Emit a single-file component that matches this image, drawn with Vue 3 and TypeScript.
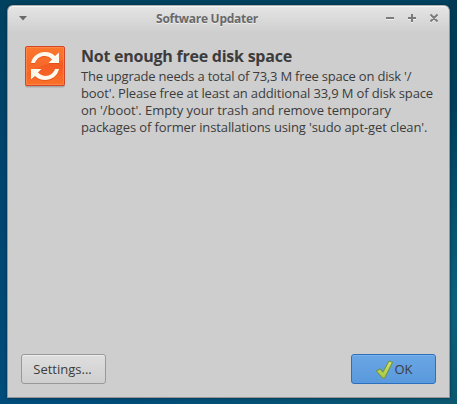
<script setup lang="ts">
const title: string = 'Software Updater'
const heading: string = 'Not enough free disk space'
const lines: string[] = [
  "The upgrade needs a total of 73,3 M free space on disk '/",
  "boot'. Please free at least an additional 33,9 M of disk space",
  "on '/boot'. Empty your trash and remove temporary",
  "packages of former installations using 'sudo apt-get clean'.",
]
</script>

<template>
  <div class="desktop">
    <section class="window">
      <header class="titlebar">
        <svg class="menu" width="8" height="5" viewBox="0 0 8 5"><path d="M0 0H8L4 4.6Z" fill="#696969" /></svg>
        <span class="title">{{ title }}</span>
        <svg class="controls" width="54" height="10" viewBox="0 0 54 10" fill="none" stroke="#fff" stroke-width="2">
          <g opacity=".6" transform="translate(0 1)"><path d="M1 5H9M23 5H31M27 1V9M45.5 1.5L52.5 8.5M52.5 1.5L45.5 8.5" /></g>
          <path stroke="#7b7b7b" d="M1 5H9M23 5H31M27 1V9M45.5 1.5L52.5 8.5M52.5 1.5L45.5 8.5" />
        </svg>
      </header>
      <main class="message">
        <svg class="app-icon" width="44" height="44" viewBox="0 0 44 44">
          <defs>
            <linearGradient id="orange" x2="0" y2="1">
              <stop stop-color="#fb7029" /><stop offset=".5" stop-color="#f35b22" /><stop offset="1" stop-color="#fc722a" />
            </linearGradient>
          </defs>
          <rect x="2" y="3" width="40" height="39.500" rx="2" fill="#777" opacity=".45" />
          <rect x="2.5" y="1.5" width="39" height="39" rx="1.5" fill="url(#orange)" stroke="#d24527" />
          <path d="M3 2H41V15C28 17 15 22 3 28Z" fill="#ff8b3d" opacity=".3" />
          <rect x="3.5" y="2.5" width="37" height="37" rx=".8" fill="none" stroke="#ff9960" opacity=".5" />
          <g fill="#c83c0c" opacity=".4" transform="translate(0 1)">
            <path d="M8 18C9.500 11 15.500 7 22 7C26 7 29.500 8.500 32 11L36 7.500V18H25.500L29 14.500C24 9 15 10 12 18Z" />
            <path d="M36 24C34.500 31 28.500 35 22 35C18 35 14.500 33.500 12 31L8 34.500V24H18.500L15 27.500C20 33 29 32 32 24Z" />
          </g>
          <g fill="#fff8ec">
            <path d="M8 18C9.500 11 15.500 7 22 7C26 7 29.500 8.500 32 11L36 7.500V18H25.500L29 14.500C24 9 15 10 12 18Z" />
            <path d="M36 24C34.500 31 28.500 35 22 35C18 35 14.500 33.500 12 31L8 34.500V24H18.500L15 27.500C20 33 29 32 32 24Z" />
          </g>
        </svg>
        <div class="copy">
          <h1>{{ heading }}</h1>
          <p><span v-for="(line, i) in lines" :key="i" :class="['line', `line-${i + 1}`]">{{ line }}</span></p>
        </div>
      </main>
      <footer class="actions">
        <button class="button" type="button"><span class="settings">Settings...</span></button>
        <button class="button primary" type="button">
          <svg width="20" height="20" viewBox="0 0 20 20">
            <defs><linearGradient id="green" x2="0" y2="1"><stop stop-color="#d8e56c" /><stop offset="1" stop-color="#a9c83e" /></linearGradient></defs>
            <path d="M2.500 12L6 9.800L9 13L15 2L18.500 3.200L10.700 19H8.500Z" fill="url(#green)" stroke="#71964b" stroke-width="1.100" stroke-linejoin="round" />
          </svg>
          <span>OK</span>
        </button>
      </footer>
    </section>
  </div>
</template>

<style>
body { margin: 0; overflow: hidden; }
</style>
<style scoped>
* { box-sizing: border-box; }
.desktop {
  width: 457px; height: 404px; padding: 5px 7px 6px;
  background:
    linear-gradient(90deg, transparent 20%, #0b5870 100%) 0 100% / 100% 6px no-repeat,
    linear-gradient(#003b54, #003f5a 25%, #0b617d 75%, #0c5870) 100% 0 / 8px 100% no-repeat,
    linear-gradient(#00415f, #00446d 40%, #004c7a);
  font-family: "Open Sans", "Noto Sans", sans-serif; color: #3c3c3c;
}
.window {
  width: 443px; height: 393px; display: flex; flex-direction: column;
  border: 1px solid #969696; border-top-color: #b0b0b0; border-radius: 6px 6px 1px 1px;
  background: linear-gradient(#e5e5e5, #cecece 27px); box-shadow: inset 0 1px #f5f5f5, 0 0 3px #002c46;
}
.titlebar { height: 26px; display: grid; grid-template-columns: 54px 1fr 54px; align-items: center; padding: 0 10px 0 11px; }
.menu { margin-top: -1px; }
.title { justify-self: center; font-size: 12px; font-weight: 700; color: #696969; line-height: 16px; white-space: nowrap; text-shadow: 0 1px #eee; margin-right: 44px; letter-spacing: -.28px; }
.controls { margin-top: -2px; }
.message { display: flex; gap: 14px; padding: 13px 0 0 15px; }
.app-icon { flex: none; }
h1 { margin: 0; font-size: 16px; line-height: 23px; font-weight: 700; white-space: nowrap; letter-spacing: -.24px; }
p { margin: 0; font-size: 13px; line-height: 17px; }
.line { display: block; width: max-content; white-space: nowrap; }
.line-1 { letter-spacing: -.2px; }
.line-2 { letter-spacing: -.13px; }
.line-3 { letter-spacing: -.05px; }
.line-4 { letter-spacing: -.12px; }
.actions { margin-top: auto; padding: 0 13px 13px; display: flex; justify-content: space-between; }
.button {
  width: 85px; height: 30px; padding: 0 2px 0 0; display: flex; align-items: center; justify-content: center;
  border: 1px solid #999; border-radius: 3px; color: #3c3c3c; background: linear-gradient(#dedede, #cfcfcf);
  box-shadow: inset 0 1px #ececec; font: 13px/18px "Open Sans", "Noto Sans", sans-serif; white-space: nowrap;
}
.primary { padding: 0; border-color: #2c6fbd; background: linear-gradient(#6aa6e5, #5999dc); box-shadow: inset 0 1px #7db2ea; }
</style>
